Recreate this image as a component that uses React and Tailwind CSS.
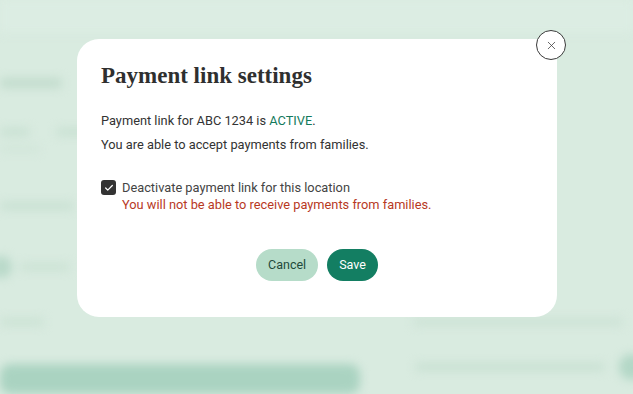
import { X, Check } from "lucide-react";

const SANS = { fontFamily: "Roboto, 'Liberation Sans', sans-serif" };

function Backdrop() {
  return (
    <div className="flex h-full w-full flex-col blur-[5px]">
      <div className="h-[36px] border-b border-[#d2e6da] bg-[#dcede3]" />
      <div className="flex flex-col pt-[44px]">
        <div className="ml-0 h-[10px] w-[62px] rounded bg-[#c2dccd]" />
        <div className="mt-[40px] flex gap-[26px]">
          <div className="h-[8px] w-[30px] rounded bg-[#c8e0d2]" />
          <div className="h-[8px] w-[50px] rounded bg-[#c8e0d2]" />
        </div>
        <div className="mt-[10px] h-[6px] w-[40px] rounded bg-[#d0e5d8]" />
        <div className="mt-[50px] h-[8px] w-[74px] rounded bg-[#c8e0d2]" />
        <div className="mt-[46px] flex items-center gap-[8px]">
          <div className="-ml-[10px] h-[22px] w-[22px] rounded-full bg-[#b9d9c9]" />
          <div className="h-[8px] w-[50px] rounded bg-[#cbe2d4]" />
        </div>
        <div className="mt-[40px] flex items-start justify-between">
          <div className="h-[8px] w-[44px] rounded bg-[#cbe2d4]" />
          <div className="mr-[10px] h-[8px] w-[210px] rounded bg-[#cce2d5]" />
        </div>
        <div className="mt-[24px] flex items-end justify-between">
          <div className="mt-[14px] h-[30px] w-[360px] rounded-[10px] bg-[#aad3c1]" />
          <div className="flex items-center gap-[14px] pb-[14px]">
            <div className="h-[8px] w-[190px] rounded bg-[#c8e0d2]" />
            <div className="-mr-[12px] h-[26px] w-[26px] rounded-full bg-[#b3d7c6]" />
          </div>
        </div>
      </div>
    </div>
  );
}

export default function App() {
  return (
    <div className="relative h-[394px] w-[633px] overflow-hidden bg-[#d9ebe0]">
      <Backdrop />

      <div className="absolute inset-0 pl-[77px] pt-[39px]">
        <div className="relative h-[278px] w-[480px] rounded-[22px] bg-white px-[24px] pt-[23px]">
          <button className="absolute -right-[9px] -top-[9px] flex h-[30px] w-[30px] items-center justify-center rounded-full border border-[#3a3a3a] bg-white text-[#3a3a3a]">
            <X className="h-[13px] w-[13px]" strokeWidth={1.4} />
          </button>

          <h2
            className="text-[23px] font-bold leading-[28px] text-[#2f2f2f]"
            style={{ fontFamily: "'Liberation Serif', 'DejaVu Serif', serif" }}
          >
            Payment link settings
          </h2>

          <div className="mt-[19px] text-[12.8px] leading-[24px] text-[#333]" style={SANS}>
            <p>
              Payment link for ABC 1234 is <span className="text-[#137a5c]">ACTIVE</span>.
            </p>
            <p>You are able to accept payments from families.</p>
          </div>

          <div className="mt-[22px] flex gap-[6px] text-[12.8px] leading-[17px]" style={SANS}>
            <span className="mt-[1px] flex h-[15px] w-[15px] shrink-0 items-center justify-center rounded-[3px] bg-[#333]">
              <Check className="h-[10px] w-[10px] text-white" strokeWidth={3} />
            </span>
            <div>
              <p className="text-[#444]">Deactivate payment link for this location</p>
              <p className="text-[#b8391f]">You will not be able to receive payments from families.</p>
            </div>
          </div>

          <div className="mt-[36px] flex justify-center gap-[9px] text-[12.5px]" style={SANS}>
            <button className="h-[32px] rounded-full bg-[#b6dcc9] px-[12px] text-[#1e4a3b]">
              Cancel
            </button>
            <button className="h-[32px] rounded-full bg-[#137e62] px-[12px] text-white">
              Save
            </button>
          </div>
        </div>
      </div>
    </div>
  );
}
